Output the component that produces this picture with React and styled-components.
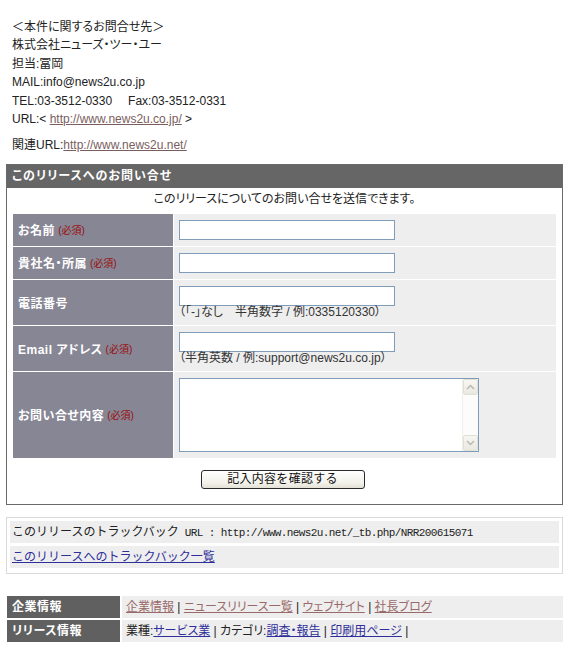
import React from 'react';
import styled, { createGlobalStyle } from 'styled-components';

const Global = createGlobalStyle`
  html, body { margin: 0; padding: 0; background: #fff; }
  body {
    font-family: "Liberation Sans", "Noto Sans CJK JP", sans-serif;
    font-size: 12px;
    color: #222;
    font-feature-settings: "palt";
  }
  * { box-sizing: border-box; }
`;

const Page = styled.div`
  width: 582px;
  padding: 18px 0 20px 6px;
  display: flex;
  flex-direction: column;
`;

const Contact = styled.div`
  padding-left: 6px;
  line-height: 18.4px;
  display: flex;
  flex-direction: column;
`;

const Related = styled.div`
  padding-left: 6px;
  margin-top: 8px;
  line-height: 18.4px;
`;

const Link = styled.a`
  color: ${p => p.$tone === 'blue' ? '#2f2f9a' : p.$tone === 'rose' ? '#996a6a' : '#7a5e5e'};
  text-decoration: underline;
`;

const Gap = styled.span`
  display: inline-block;
  width: ${p => p.$w}px;
`;

const FormBox = styled.div`
  margin-top: 9px;
  width: 557px;
  border: 1px solid #6a6a6a;
  display: flex;
  flex-direction: column;
`;

const FormHeader = styled.div`
  height: 23px;
  background: #666;
  color: #fff;
  font-weight: bold;
  padding-left: 5px;
  line-height: 22px;
  letter-spacing: 1px;
`;

const Desc = styled.div`
  height: 26px;
  padding-top: 1px;
  line-height: 20px;
  text-align: center;
  color: #222;
`;

const FormGrid = styled.div`
  margin: 0 6px;
  display: grid;
  grid-template-columns: 160px 1fr;
  gap: 1px;
`;

const LabelCell = styled.div`
  background: #878695;
  color: #fff;
  font-weight: bold;
  padding-left: 5px;
  display: flex;
  align-items: center;
  letter-spacing: 0.5px;
`;

const Req = styled.span`
  color: #9a0d0d;
  font-weight: normal;
  font-size: 10px;
  margin-left: 3px;
  letter-spacing: 0;
`;

const ValueCell = styled.div`
  background: #eeeeee;
  padding: 6px 5px;
  display: flex;
  flex-direction: column;
  align-items: flex-start;
`;

const TextInput = styled.input`
  width: 216px;
  height: 20px;
  border: 1px solid #7f9db9;
  background: #fff;
  margin: 0;
  padding: 0 2px;
  font: inherit;
`;

const Hint = styled.div`
  line-height: 13px;
  height: 13px;
  color: #333;
  white-space: nowrap;
`;

const AreaWrap = styled.div`
  width: 300px;
  height: 74px;
  border: 1px solid #7f9db9;
  background: #fff;
  display: flex;
`;

const Area = styled.textarea`
  flex: 1;
  border: 0;
  resize: none;
  outline: none;
  margin: 0;
  padding: 2px;
  font: inherit;
  background: #fff;
`;

const ScrollBar = styled.div`
  width: 16px;
  background: #fcfcfa;
  display: flex;
  flex-direction: column;
  justify-content: space-between;
  border-left: 1px solid #f0f0ea;
`;

const ScrollBtn = styled.div`
  width: 15px;
  height: 16px;
  background: linear-gradient(#f7f7f2, #e9e9e1);
  border: 1px solid #e0e0d6;
  border-radius: 2px;
  display: flex;
  align-items: center;
  justify-content: center;
`;

const ButtonRow = styled.div`
  padding: 12px 0 15px;
  display: flex;
  justify-content: center;
`;

const Submit = styled.button`
  width: 164px;
  height: 19px;
  margin-left: -4px;
  border: 1px solid #2a2a2a;
  border-radius: 3px;
  background: linear-gradient(#ffffff, #f2f1ea 70%, #e3e1d6);
  font: inherit;
  font-feature-settings: normal;
  color: #111;
  padding: 0;
  line-height: 17px;
  letter-spacing: 0.3px;
`;

const TbBox = styled.div`
  margin-top: 12px;
  width: 557px;
  border: 1px solid #dadada;
  padding: 3px 3px 5px;
  display: flex;
  flex-direction: column;
  gap: 3px;
`;

const TbRow = styled.div`
  height: 22px;
  background: #eeeeee;
  padding-left: 2px;
  line-height: 22px;
  white-space: nowrap;
  font-feature-settings: normal;
`;

const Mono = styled.span`
  font-family: "Liberation Mono", monospace;
  font-size: 11px;
  letter-spacing: -0.6px;
`;

const InfoGrid = styled.div`
  margin-top: 22px;
  margin-left: 1px;
  width: 556px;
  display: grid;
  grid-template-columns: 113px 1fr;
  gap: 2px;
`;

const InfoLabel = styled.div`
  height: 22px;
  background: #606060;
  color: #fff;
  font-weight: bold;
  padding-left: 5px;
  line-height: 22px;
  letter-spacing: 0.5px;
`;

const InfoValue = styled.div`
  height: 22px;
  background: #eeeeee;
  padding-left: 4px;
  line-height: 22px;
  white-space: nowrap;
`;

const Chevron = ({ up }) => (
  <svg width="9" height="6" viewBox="0 0 9 6">
    <path d={up ? 'M1 5 L4.5 1.5 L8 5' : 'M1 1 L4.5 4.5 L8 1'} fill="none" stroke="#b9b9b0" strokeWidth="1.5" />
  </svg>
);

export default function App() {
  return (
    <Page>
      <Global />
      <Contact>
        <span>＜本件に関するお問合せ先＞</span>
        <span>株式会社ニューズ・ツー・ユー</span>
        <span>担当:冨岡</span>
        <span>MAIL:info@news2u.co.jp</span>
        <span>TEL:03-3512-0330<Gap $w={16} />Fax:03-3512-0331</span>
        <span>URL:&lt; <Link href="#">http://www.news2u.co.jp/</Link> &gt;</span>
      </Contact>
      <Related>関連URL:<Link href="#">http://www.news2u.net/</Link></Related>

      <FormBox>
        <FormHeader>このリリースへのお問い合せ</FormHeader>
        <Desc>このリリースについてのお問い合せを送信できます。</Desc>
        <FormGrid>
          <LabelCell>お名前<Req>(必須)</Req></LabelCell>
          <ValueCell><TextInput /></ValueCell>

          <LabelCell>貴社名・所属<Req>(必須)</Req></LabelCell>
          <ValueCell><TextInput /></ValueCell>

          <LabelCell>電話番号</LabelCell>
          <ValueCell>
            <TextInput />
            <Hint>（「-」なし　半角数字 / 例:0335120330）</Hint>
          </ValueCell>

          <LabelCell>Email アドレス<Req>(必須)</Req></LabelCell>
          <ValueCell>
            <TextInput />
            <Hint>（半角英数 / 例:support@news2u.co.jp）</Hint>
          </ValueCell>

          <LabelCell>お問い合せ内容<Req>(必須)</Req></LabelCell>
          <ValueCell>
            <AreaWrap>
              <Area />
              <ScrollBar>
                <ScrollBtn><Chevron up /></ScrollBtn>
                <ScrollBtn><Chevron /></ScrollBtn>
              </ScrollBar>
            </AreaWrap>
          </ValueCell>
        </FormGrid>
        <ButtonRow>
          <Submit type="button">記入内容を確認する</Submit>
        </ButtonRow>
      </FormBox>

      <TbBox>
        <TbRow>このリリースのトラックバック<Mono> URL : http://www.news2u.net/_tb.php/NRR200615071</Mono></TbRow>
        <TbRow><Link href="#" $tone="blue">このリリースへのトラックバック一覧</Link></TbRow>
      </TbBox>

      <InfoGrid>
        <InfoLabel>企業情報</InfoLabel>
        <InfoValue>
          <Link href="#" $tone="rose">企業情報</Link> | <Link href="#" $tone="rose">ニュースリリース一覧</Link> | <Link href="#" $tone="rose">ウェブサイト</Link> | <Link href="#" $tone="rose">社長ブログ</Link>
        </InfoValue>
        <InfoLabel>リリース情報</InfoLabel>
        <InfoValue>
          業種:<Link href="#" $tone="blue">サービス業</Link> | カテゴリ:<Link href="#" $tone="blue">調査・報告</Link> | <Link href="#" $tone="blue">印刷用ページ</Link> |
        </InfoValue>
      </InfoGrid>
    </Page>
  );
}
